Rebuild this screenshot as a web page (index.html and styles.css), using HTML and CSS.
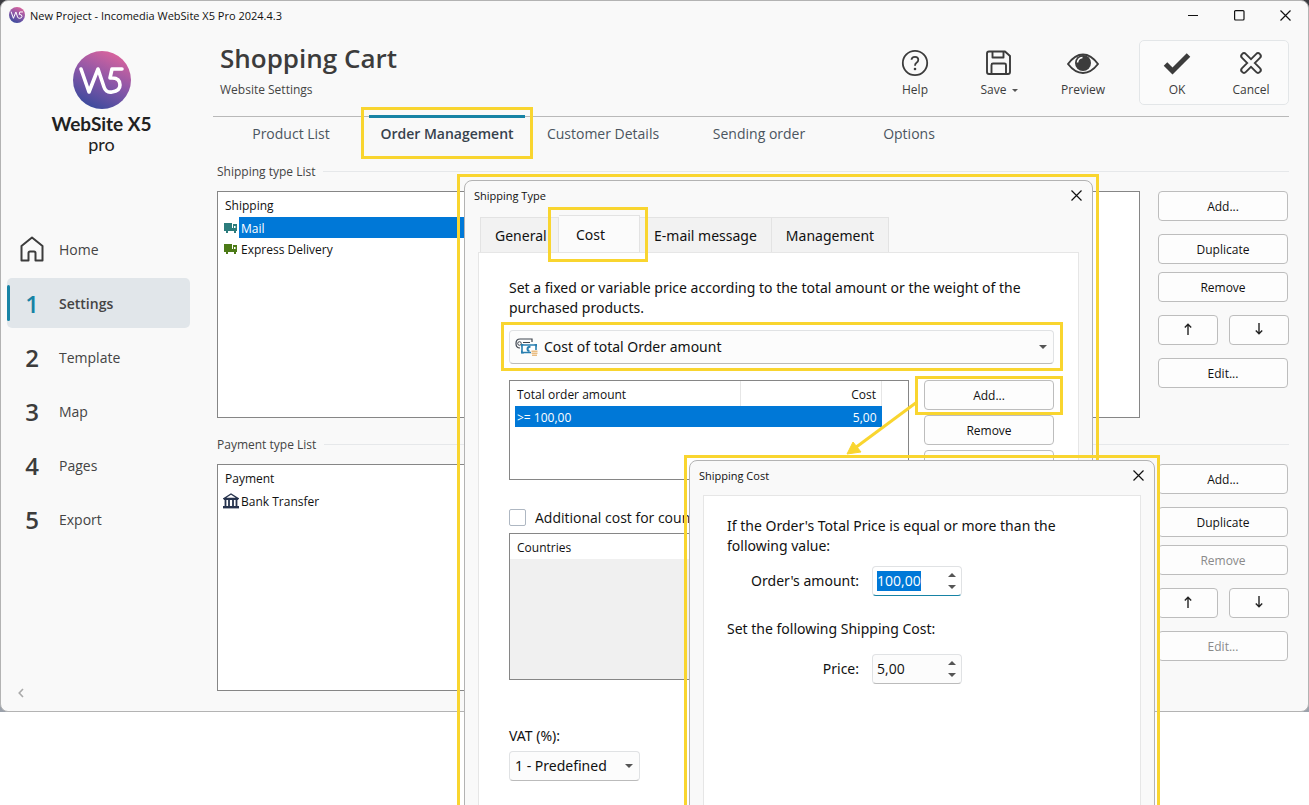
FILE: index.html
```html
<!DOCTYPE html>
<html lang="en">
<head>
    <meta charset="UTF-8">
    <meta name="viewport" content="width=device-width, initial-scale=1.0">
    <title>New Project - Incomedia WebSite X5 Pro 2024.4.3</title>
    <link rel="stylesheet" href="styles.css">
</head>
<body>

<svg class="symbols" aria-hidden="true">
    <defs>
        <linearGradient id="logo-fill" x1="0.75" y1="0" x2="0.3" y2="1">
            <stop offset="0" stop-color="#df649c"/>
            <stop offset="0.5" stop-color="#8a57a8"/>
            <stop offset="1" stop-color="#384a9c"/>
        </linearGradient>
    </defs>
    <symbol id="logo" viewBox="0 0 58 58">
        <circle cx="29" cy="29" r="29" fill="url(#logo-fill)"/>
        <path d="M8 18 L16 41 L25 18 L31 36 Q33 42 39 41 Q47 40 47 34 Q47 27 39 27 L37 27 L39 18 H49" fill="none" stroke="#fff" stroke-width="3.6" stroke-linecap="round" stroke-linejoin="round"/>
    </symbol>
    <symbol id="cross" viewBox="0 0 11 11">
        <path d="M0.5 0.5 L10.5 10.5 M10.5 0.5 L0.5 10.5" stroke="#111" stroke-width="1.2"/>
    </symbol>
    <symbol id="caret" viewBox="0 0 8 4">
        <path d="M0 0 H8 L4 4 Z" fill="#555"/>
    </symbol>
    <symbol id="arrow-up" viewBox="0 0 8 12">
        <path d="M4 12 V1.5 M0.8 4.5 L4 1.2 L7.2 4.5" fill="none" stroke="#222" stroke-width="1.4"/>
    </symbol>
    <symbol id="arrow-down" viewBox="0 0 8 12">
        <path d="M4 0 V10.5 M0.8 7.5 L4 10.8 L7.2 7.5" fill="none" stroke="#222" stroke-width="1.4"/>
    </symbol>
    <symbol id="truck" viewBox="0 0 14 10">
        <path d="M0 0 H8 V5 H9 V1 H13 V8 H12 V10 H10 V8 H4 V10 H2 V8 H0 Z" fill="currentColor"/>
        <path d="M10 3 H11.5 V5 H10 Z" fill="#fff"/>
    </symbol>
</svg>

<div class="page">
    <div class="desktop">
        <div class="window">
            <header class="titlebar">
                <svg class="app-icon"><use href="#logo"/></svg>
                <span class="app-title">New Project - Incomedia WebSite X5 Pro 2024.4.3</span>
                <button class="caption" aria-label="Minimize"><svg width="11" height="11"><path d="M0 5.5 H10" stroke="#111"/></svg></button>
                <button class="caption" aria-label="Maximize"><svg width="11" height="11"><rect x="0.6" y="0.6" width="9.4" height="9.4" rx="1" fill="none" stroke="#111" stroke-width="1.2"/></svg></button>
                <button class="caption" aria-label="Close"><svg width="11" height="11"><use href="#cross"/></svg></button>
            </header>

            <div class="workspace">
                <aside class="sidebar">
                    <div class="brand">
                        <svg class="brand-logo"><use href="#logo"/></svg>
                        <div class="brand-name">WebSite X5</div>
                        <div class="brand-edition">pro</div>
                    </div>
                    <nav class="steps">
                        <a href="#" class="step">
                            <span class="step-mark"><svg width="24" height="26" viewBox="0 0 24 26"><path d="M1.5 24.5 V10 L12 1.5 L22.5 10 V24.5 H15.5 V17 Q15.5 15.5 14 15.5 H10 Q8.5 15.5 8.5 17 V24.5 Z" fill="none" stroke="#3c3c3c" stroke-width="2" stroke-linejoin="round"/></svg></span>Home</a>
                        <a href="#" class="step current"><span class="step-mark">1</span>Settings</a>
                        <a href="#" class="step"><span class="step-mark">2</span>Template</a>
                        <a href="#" class="step"><span class="step-mark">3</span>Map</a>
                        <a href="#" class="step"><span class="step-mark">4</span>Pages</a>
                        <a href="#" class="step"><span class="step-mark">5</span>Export</a>
                    </nav>
                    <button class="collapse" aria-label="Collapse"><svg width="6" height="10"><path d="M5 1 L1.2 5 L5 9" fill="none" stroke="#aaa" stroke-width="1.6"/></svg></button>
                </aside>

                <main class="main">
                    <div class="heading">
                        <div class="heading-text">
                            <h1>Shopping Cart</h1>
                            <p>Website Settings</p>
                        </div>
                        <div class="tools">
                            <button class="tool">
                                <svg width="28" height="28" viewBox="0 0 28 28"><circle cx="14" cy="14" r="12.2" fill="none" stroke="#3c3c3c" stroke-width="1.8"/><path d="M10.5 10.8 Q10.7 7.8 14 7.8 Q17.3 7.8 17.3 10.8 Q17.3 12.6 15.5 13.8 Q14 14.8 14 16.8" fill="none" stroke="#3c3c3c" stroke-width="1.8"/><circle cx="14" cy="20" r="1.3" fill="#3c3c3c"/></svg>
                                <span>Help</span>
                            </button>
                            <button class="tool">
                                <svg width="28" height="28" viewBox="0 0 28 28"><path d="M4 2.5 H20 L25 7 V23 Q25 25 23 25 H4 Q2 25 2 23 V4.5 Q2 2.5 4 2.5 Z M7.5 3 V8.5 H18.5 V3 M6.5 25 V16 Q6.5 14.5 8 14.5 H19.5 Q21 14.5 21 16 V25" fill="none" stroke="#3c3c3c" stroke-width="1.9" stroke-linejoin="round"/></svg>
                                <span>Save <svg class="save-caret" width="6" height="3" viewBox="0 0 8 4"><use href="#caret"/></svg></span>
                            </button>
                            <button class="tool">
                                <svg width="34" height="28" viewBox="0 0 34 28"><path d="M2 15 Q9 5.5 17 5.5 Q25 5.5 32 15 Q25 24 17 24 Q9 24 2 15 Z" fill="none" stroke="#3c3c3c" stroke-width="1.9"/><circle cx="17" cy="14" r="8" fill="#3c3c3c"/><path d="M11.5 13.5 Q12 9 16.5 8.5" fill="none" stroke="#fff" stroke-width="1.6"/></svg>
                                <span>Preview</span>
                            </button>
                            <div class="confirm">
                                <button class="tool">
                                    <svg width="28" height="28" viewBox="0 0 28 28"><path d="M2.5 15 L9.5 22 L25.5 6" fill="none" stroke="#3c3c3c" stroke-width="5"/></svg>
                                    <span>OK</span>
                                </button>
                                <button class="tool">
                                    <svg width="28" height="28" viewBox="0 0 28 28"><path d="M7 7 L21 21 M21 7 L7 21" stroke="#3c3c3c" stroke-width="7.4" stroke-linecap="round"/><path d="M7 7 L21 21 M21 7 L7 21" stroke="#fbfbfb" stroke-width="3.6" stroke-linecap="round"/></svg>
                                    <span>Cancel</span>
                                </button>
                            </div>
                        </div>
                    </div>

                    <nav class="tabs">
                        <a href="#" class="tab">Product List</a>
                        <a href="#" class="tab active">Order Management</a>
                        <a href="#" class="tab">Customer Details</a>
                        <a href="#" class="tab">Sending order</a>
                        <a href="#" class="tab short">Options</a>
                    </nav>

                    <section class="group">
                        <h2>Shipping type List</h2>
                        <div class="group-body">
                            <div class="list">
                                <table>
                                    <thead><tr><th colspan="2">Shipping</th></tr></thead>
                                    <tbody>
                                        <tr class="selected"><td class="row-icon mail"><svg width="14" height="10"><use href="#truck"/></svg></td><td>Mail</td></tr>
                                        <tr><td class="row-icon express"><svg width="14" height="10"><use href="#truck"/></svg></td><td>Express Delivery</td></tr>
                                    </tbody>
                                </table>
                            </div>
                            <div class="actions">
                                <button class="button spaced">Add...</button>
                                <button class="button">Duplicate</button>
                                <button class="button spaced">Remove</button>
                                <div class="order-buttons">
                                    <button class="button" aria-label="Move up"><svg width="8" height="12"><use href="#arrow-up"/></svg></button>
                                    <button class="button" aria-label="Move down"><svg width="8" height="12"><use href="#arrow-down"/></svg></button>
                                </div>
                                <button class="button">Edit...</button>
                            </div>
                        </div>
                    </section>

                    <section class="group">
                        <h2>Payment type List</h2>
                        <div class="group-body">
                            <div class="list">
                                <table>
                                    <thead><tr><th colspan="2">Payment</th></tr></thead>
                                    <tbody>
                                        <tr><td class="row-icon bank"><svg width="16" height="16" viewBox="0 0 16 16"><path d="M1 5.5 L8 1 L15 5.5 Z" fill="none" stroke="#26334d" stroke-width="1.4"/><path d="M1 6 H15 M2.5 6 V13 M6 6 V13 M10 6 V13 M13.5 6 V13" stroke="#26334d" stroke-width="1.8"/><path d="M0 14.2 H16" stroke="#26334d" stroke-width="2.4"/></svg></td><td>Bank Transfer</td></tr>
                                    </tbody>
                                </table>
                            </div>
                            <div class="actions">
                                <button class="button spaced">Add...</button>
                                <button class="button">Duplicate</button>
                                <button class="button spaced" disabled>Remove</button>
                                <div class="order-buttons">
                                    <button class="button" aria-label="Move up"><svg width="8" height="12"><use href="#arrow-up"/></svg></button>
                                    <button class="button" aria-label="Move down"><svg width="8" height="12"><use href="#arrow-down"/></svg></button>
                                </div>
                                <button class="button" disabled>Edit...</button>
                            </div>
                        </div>
                    </section>
                </main>
            </div>
        </div>
    </div>

    <div class="frame shipping-type">
        <div class="dialog">
            <header class="dialog-title">
                <span>Shipping Type</span>
                <button class="dialog-close" aria-label="Close"><svg width="11" height="11"><use href="#cross"/></svg></button>
            </header>
            <div class="dialog-tabs">
                <button class="dialog-tab general">General</button>
                <button class="dialog-tab active">Cost</button>
                <button class="dialog-tab">E-mail message</button>
                <button class="dialog-tab">Management</button>
            </div>
            <div class="panel cost-panel">
                <p class="text">Set a fixed or variable price according to the total amount or the weight of the purchased products.</p>

                <div class="dropdown marked">
                    <svg width="23" height="18" viewBox="0 0 23 18">
                        <path d="M5 1 H17 V4 M5 1 Q1 1 1 5.5 Q1 10 5 10 M8 4.5 H15" fill="none" stroke="#3f4650" stroke-width="1.2"/>
                        <circle cx="4.5" cy="5.5" r="1.8" fill="none" stroke="#3f4650"/>
                        <path d="M7 7 H21 V14.5 H7 Z" fill="#fff" stroke="#2a7fb0" stroke-width="1.6"/>
                        <path d="M6 6 H9 L6 9 Z M22 6 H19 L22 9 Z M6 15.4 H9 L6 12 Z" fill="#2a7fb0"/>
                        <path d="M15.5 8.8 Q12.5 8.8 12.5 11 Q12.5 13 14.5 13" fill="none" stroke="#2a7fb0" stroke-width="2"/>
                        <path d="M16 12 H23 V18 H16 Z" fill="#fcfcfc"/>
                        <path d="M16.5 13.2 H22.5 M16.5 15.2 H22.5 M17 17.2 H22" stroke="#e9bd83" stroke-width="1.4"/>
                    </svg>
                    <select aria-label="Cost type"><option>Cost of total Order amount</option></select>
                    <svg class="caret" width="8" height="4"><use href="#caret"/></svg>
                </div>

                <div class="amounts">
                    <div class="list amount-list">
                        <table>
                            <thead><tr><th>Total order amount</th><th class="number">Cost</th></tr></thead>
                            <tbody><tr><td>&gt;= 100,00</td><td class="number">5,00</td></tr></tbody>
                        </table>
                    </div>
                    <div class="amount-actions">
                        <button class="button add-cost">Add...
                            <svg class="pointer" width="76" height="62" viewBox="0 0 76 62"><path d="M74 4 L12 50" stroke="#f9d52f" stroke-width="3"/><path d="M4 56 L10 44 L18 54 Z" fill="#f9d52f" stroke="#f9d52f"/></svg>
                        </button>
                        <button class="button">Remove</button>
                        <button class="button">Edit...</button>
                    </div>
                </div>

                <label class="check"><input type="checkbox"> Additional cost for countries</label>
                <div class="list countries">
                    <table>
                        <thead><tr><th>Countries</th></tr></thead>
                    </table>
                </div>

                <label class="text vat-label" for="vat">VAT (%):</label>
                <div class="dropdown vat">
                    <select id="vat"><option>1 - Predefined</option></select>
                    <svg class="caret" width="8" height="4"><use href="#caret"/></svg>
                </div>
            </div>
        </div>
    </div>

    <div class="frame shipping-cost">
        <div class="dialog">
            <header class="dialog-title">
                <span>Shipping Cost</span>
                <button class="dialog-close" aria-label="Close"><svg width="11" height="11"><use href="#cross"/></svg></button>
            </header>
            <div class="panel value-panel">
                <p class="text">If the Order's Total Price is equal or more than the following value:</p>
                <div class="field">
                    <label for="amount">Order's amount:</label>
                    <div class="spin focused">
                        <input type="text" id="amount" value="100,00">
                        <div class="spin-buttons">
                            <button aria-label="Increase"><svg width="8" height="4"><path d="M0 4 H8 L4 0 Z" fill="#555"/></svg></button>
                            <button aria-label="Decrease"><svg width="8" height="4"><use href="#caret"/></svg></button>
                        </div>
                    </div>
                </div>
                <p class="text">Set the following Shipping Cost:</p>
                <div class="field">
                    <label for="price">Price:</label>
                    <div class="spin">
                        <input type="text" id="price" value="5,00">
                        <div class="spin-buttons">
                            <button aria-label="Increase"><svg width="8" height="4"><path d="M0 4 H8 L4 0 Z" fill="#555"/></svg></button>
                            <button aria-label="Decrease"><svg width="8" height="4"><use href="#caret"/></svg></button>
                        </div>
                    </div>
                </div>
            </div>
        </div>
    </div>
</div>

<script>
    // Start with the order amount ready to be overwritten
    let amount = document.getElementById("amount");
    amount.focus();
    amount.select();
</script>

</body>
</html>
```
FILE: styles.css
```css
*,
*::before,
*::after {
    margin: 0;
    padding: 0;
    box-sizing: border-box;
}

body,
button,
input,
select {
    font-family: "Open Sans", "Noto Sans", sans-serif;
    color: #111;
}

body {
    background: #fff;
    font-size: 12px;
}

button {
    border: none;
    background: none;
    font-size: 12px;
}

a {
    color: inherit;
    text-decoration: none;
}

svg {
    flex: none;
}

table {
    width: 100%;
    border-collapse: collapse;
}

th {
    font-weight: normal;
    text-align: left;
}

.symbols {
    position: absolute;
    width: 0;
    height: 0;
}

.page {
    position: relative;
    height: 100vh;
    overflow: hidden;
}

/* main window */

.desktop {
    background: linear-gradient(#3b3b40, #9ba1ab);
}

.window {
    background: #f9f9f9;
    border: 1px solid #b3b3b3;
    border-radius: 8px;
    overflow: hidden;
}

.titlebar {
    display: flex;
    align-items: center;
    height: 30px;
    padding: 0 0 2px 8px;
    font-size: 11px;
}

.app-icon {
    width: 16px;
    height: 16px;
    margin-right: 5px;
}

.app-title {
    flex: 1;
}

.caption {
    display: flex;
    align-items: center;
    justify-content: center;
    width: 46px;
    height: 28px;
}

.workspace {
    display: flex;
}

.sidebar {
    display: flex;
    flex-direction: column;
    width: 212px;
    padding: 20px 23px 13px 6px;
}

.brand {
    display: flex;
    flex-direction: column;
    align-items: center;
    height: 173px;
    margin-right: -6px;
    font-family: Lato, sans-serif;
    color: #222;
}

.brand-logo {
    width: 58px;
    height: 58px;
    margin-bottom: 4px;
}

.brand-name {
    font-size: 19px;
    font-weight: bold;
    line-height: 22px;
}

.brand-edition {
    font-size: 18px;
    line-height: 18px;
}

.steps {
    display: flex;
    flex-direction: column;
    gap: 4px;
}

.step {
    display: flex;
    align-items: center;
    height: 50px;
    border-radius: 5px;
    font-size: 14px;
    color: #444;
}

.step-mark {
    display: flex;
    justify-content: center;
    width: 52px;
    padding-right: 2px;
    font-size: 24px;
    font-weight: 600;
    color: #3c3c3c;
}

.step.current {
    background: #e1e6ea;
    font-weight: 600;
    position: relative;
}

.step.current::before {
    content: "";
    position: absolute;
    left: 0;
    top: 7px;
    bottom: 7px;
    width: 3px;
    border-radius: 2px;
    background: #1783a5;
}

.step.current .step-mark {
    color: #1783a5;
}

.collapse {
    display: flex;
    margin-top: auto;
    padding-left: 11px;
}

.main {
    flex: 1;
    padding: 9px 19px 20px 0;
}

.heading {
    display: flex;
    justify-content: space-between;
    height: 77px;
    border-bottom: 1px solid #b9b9b9;
}

.heading-text {
    padding-left: 7px;
}

h1 {
    font-size: 26px;
    font-weight: 600;
    line-height: 36px;
    color: #3c3c3c;
}

.heading-text p {
    line-height: 28px;
    color: #444;
}

.tools {
    display: flex;
    align-items: flex-start;
}

.tool {
    display: flex;
    flex-direction: column;
    align-items: center;
    gap: 4px;
    width: 84px;
    padding-top: 9px;
    line-height: 18px;
}

.tool span {
    color: #3c3c3c;
}

.save-caret {
    margin-left: 2px;
    vertical-align: middle;
}

.confirm {
    display: flex;
    width: 150px;
    height: 65px;
    margin-left: 14px;
    border: 1px solid #e3e6e8;
    border-radius: 5px;
    background: #fbfbfb;
}

.confirm .tool {
    width: 74px;
    padding-top: 8px;
}

.tabs {
    display: flex;
    height: 45px;
}

.tab {
    position: relative;
    width: 156px;
    line-height: 34px;
    text-align: center;
    font-size: 14px;
    color: #4b5560;
}

.tab.short {
    width: 144px;
}

.tab.active {
    font-weight: 600;
    color: #37424d;
}

.tab.active::before {
    content: "";
    position: absolute;
    left: 0;
    right: 0;
    top: -2px;
    height: 3px;
    background: #1783a5;
}

.tab.active::after {
    content: "";
    position: absolute;
    inset: -10px -8px 3px;
    border: 3px solid #f9d52f;
}

.group {
    padding-left: 4px;
}

.group + .group {
    margin-top: 17px;
}

h2 {
    display: flex;
    align-items: center;
    gap: 8px;
    height: 18px;
    margin-bottom: 11px;
    font-size: 12px;
    font-weight: normal;
    color: #444;
}

h2::after {
    content: "";
    flex: 1;
    height: 1px;
    background: #e6e8ea;
}

.group-body {
    display: flex;
    gap: 18px;
}

.list {
    flex: 1;
    border: 1px solid #868686;
    background: #fff;
}

.group .list {
    height: 227px;
    padding-right: 60px;
}

.list th {
    height: 25px;
    padding-top: 2px;
    padding-left: 7px;
}

.list td {
    height: 21px;
    padding-top: 2px;
    padding-left: 2px;
}

.group .row-icon {
    width: 21px;
    padding-top: 0;
    padding-left: 6px;
}

.row-icon svg {
    display: block;
}

.mail {
    color: #2c7c7c;
}

.express {
    color: #4c7a17;
}

.group .selected td:last-child,
.amount-list tbody td {
    background: #0078d7;
    color: #fff;
}

.group .bank {
    padding-left: 5px;
}

.actions {
    display: flex;
    flex-direction: column;
    gap: 8px;
    width: 131px;
}

.button {
    height: 30px;
    margin-right: 1px;
    border: 1px solid #bdbdbd;
    border-radius: 4px;
    background: #fdfdfd;
    font-size: 12px;
}

.button:disabled {
    color: #8a8a8a;
}

.spaced {
    margin-bottom: 5px;
}

.order-buttons {
    display: flex;
    gap: 11px;
    margin-bottom: 5px;
}

.order-buttons .button {
    flex: 1;
    margin: 0;
}

/* dialogs */

.frame {
    position: absolute;
    bottom: -20px;
    border: 3px solid #f9d52f;
}

.shipping-type {
    left: 457px;
    top: 174px;
    width: 642px;
    padding: 3px 3px 3px 4px;
}

.frame .text,
.frame select,
.field label,
.dialog-tab {
    font-family: "Noto Sans", sans-serif;
}

.shipping-cost {
    left: 684px;
    top: 455px;
    width: 476px;
    padding: 2px;
}

.dialog {
    display: flex;
    flex-direction: column;
    height: 100%;
    border: 1px solid #b3b3b3;
    border-radius: 8px;
    background: #f9f9f9;
}

.dialog-title {
    display: flex;
    justify-content: space-between;
    align-items: center;
    height: 28px;
    padding: 0 10px 0 9px;
    font-size: 11px;
}

.dialog-close {
    display: flex;
}

.dialog-tabs {
    display: flex;
    align-items: flex-end;
    padding: 6px 0 0 15px;
}

.dialog-tab {
    height: 35px;
    padding: 0 14px;
    border: 1px solid #e3e3e3;
    border-bottom: none;
    border-left: none;
    background: #f2f2f2;
    font-size: 14px;
    white-space: nowrap;
}

.dialog-tab.general {
    width: 79px;
    border-left: 1px solid #e3e3e3;
}

.dialog-tab.active {
    position: relative;
    width: 81px;
    height: 37px;
    padding: 0 0 0 17px;
    background: #fbfbfb;
    text-align: left;
}

.dialog-tab.active::after {
    content: "";
    position: absolute;
    inset: -9px -9px -10px -11px;
    border: 3px solid #f9d52f;
}

.panel {
    flex: 1;
    border: 1px solid #e6e6e6;
    border-bottom: none;
    background: #fff;
}

.cost-panel {
    margin: 0 13px;
    padding: 25px 24px 0 30px;
}

.text {
    font-size: 14px;
    line-height: 20px;
}

.dropdown {
    position: relative;
    display: flex;
    align-items: center;
    gap: 6px;
    height: 34px;
    padding: 0 6px 0 5px;
    border: 1px solid #e0e2e4;
    border-bottom-color: #bbb;
    border-radius: 4px;
    background: #fcfcfc;
}

.dropdown select {
    flex: 1;
    min-width: 0;
    padding-bottom: 2px;
    appearance: none;
    border: none;
    background: none;
    font-size: 14px;
    outline: none;
}

.marked {
    margin-top: 12px;
}

.marked::after {
    content: "";
    position: absolute;
    inset: -9px -10px -8px -9px;
    border: 3px solid #f9d52f;
    pointer-events: none;
}

.amounts {
    display: flex;
    gap: 15px;
    margin-top: 16px;
}

.amount-list {
    height: 100px;
    padding: 0 26px 0 5px;
}

.amount-list th {
    padding-left: 2px;
}

.amount-list th.number {
    width: 141px;
    border: 1px solid #e6e6e6;
    border-width: 0 1px;
}

.list .number {
    padding-right: 5px;
    text-align: right;
}

.amount-actions {
    display: flex;
    flex-direction: column;
    gap: 5px;
    width: 130px;
}

.amount-actions .button {
    margin: 0;
}

.add-cost {
    position: relative;
}

.add-cost::after {
    content: "";
    position: absolute;
    inset: -5px -10px -6px;
    border: 3px solid #f9d52f;
}

.pointer {
    position: absolute;
    right: 134px;
    top: 17px;
}

.check {
    display: flex;
    align-items: center;
    gap: 9px;
    margin-top: 27px;
    height: 20px;
    font-size: 14px;
}

.check input {
    appearance: none;
    width: 17px;
    height: 17px;
    border: 1px solid #aeb7c2;
    border-radius: 2px;
    background: #fff;
}

.countries {
    flex: none;
    height: 147px;
    margin-top: 6px;
    background: #f0f0f0;
}

.countries th {
    background: #fff;
}

.vat-label {
    display: block;
    margin: 46px 0 5px;
}

.dropdown.vat {
    width: 131px;
    height: 30px;
}

.value-panel {
    margin: 6px 13px 0;
    padding: 20px 30px 20px 23px;
}

.field {
    display: flex;
    align-items: center;
    gap: 13px;
    margin: 10px 0 23px;
    font-size: 14px;
}

.text + .field:last-child {
    margin-top: 15px;
}

.field label {
    width: 132px;
    padding-bottom: 2px;
    text-align: right;
}

.spin {
    display: flex;
    align-items: center;
    width: 90px;
    height: 30px;
    padding-left: 4px;
    border: 1px solid #e0e2e4;
    border-bottom-color: #bbb;
    border-radius: 4px;
    background: #fcfcfc;
}

.spin.focused {
    border-bottom-color: #1783a5;
    background: #fff;
}

.spin input {
    flex: 1;
    min-width: 0;
    border: none;
    outline: none;
    background: none;
    font-size: 14px;
    line-height: 20px;
    caret-color: transparent;
}

.spin input::selection {
    background: #0078d7;
    color: #fff;
}

.spin-buttons {
    display: flex;
    flex-direction: column;
    gap: 8px;
    padding-right: 5px;
}

.spin-buttons button {
    display: flex;
}
```
